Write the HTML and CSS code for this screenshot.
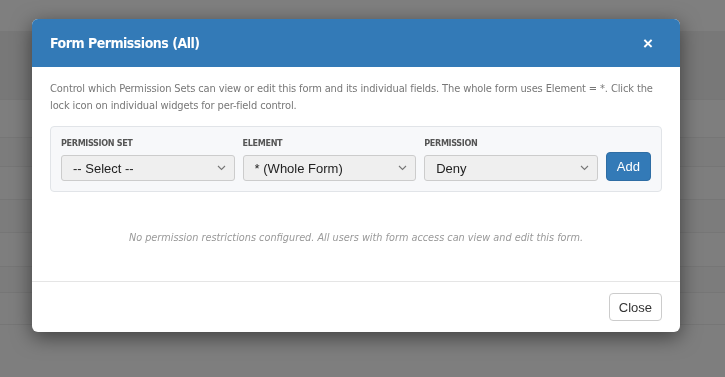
FILE: index.html
```html
<!DOCTYPE html>
<html lang="en">
<head>
    <meta charset="UTF-8">
    <meta name="viewport" content="width=device-width, initial-scale=1.0">
    <title>Form Permissions</title>
    <link rel="stylesheet" href="styles.css">
</head>
<body>
    <!-- Page behind the backdrop -->
    <div class="page">
        <div class="topbar"></div>
        <div class="row r1"></div>
        <div class="row r2"></div>
        <div class="row r3"></div>
        <div class="row r4"></div>
        <div class="row r5"></div>
        <div class="row r6"></div>
        <div class="row r7"></div>
        <div class="row r8"></div>
    </div>

    <div class="backdrop"></div>

    <div class="modal">
        <div class="modal-header">
            <h4 class="modal-title">Form Permissions (All)</h4>
            <span class="modal-close">&times;</span>
        </div>

        <div class="modal-body">
            <p class="help">Control which Permission Sets can view or edit this form and its individual fields. The whole form uses Element = *. Click the lock icon on individual widgets for per-field control.</p>

            <div class="perm-box">
                <div class="field">
                    <label for="permSet">Permission Set</label>
                    <div class="select-wrap">
                        <select id="permSet">
                            <option>-- Select --</option>
                        </select>
                        <svg class="chevron" width="9" height="6" viewBox="0 0 9 6"><path d="M1 1l3.5 3.5L8 1" fill="none" stroke="#777" stroke-width="1.1"/></svg>
                    </div>
                </div>
                <div class="field">
                    <label for="element">Element</label>
                    <div class="select-wrap">
                        <select id="element">
                            <option>* (Whole Form)</option>
                        </select>
                        <svg class="chevron" width="9" height="6" viewBox="0 0 9 6"><path d="M1 1l3.5 3.5L8 1" fill="none" stroke="#777" stroke-width="1.1"/></svg>
                    </div>
                </div>
                <div class="field">
                    <label for="permission">Permission</label>
                    <div class="select-wrap">
                        <select id="permission">
                            <option>Deny</option>
                            <option>View</option>
                            <option>Edit</option>
                        </select>
                        <svg class="chevron" width="9" height="6" viewBox="0 0 9 6"><path d="M1 1l3.5 3.5L8 1" fill="none" stroke="#777" stroke-width="1.1"/></svg>
                    </div>
                </div>
                <button class="btn btn-primary">Add</button>
            </div>

            <div class="empty">No permission restrictions configured. All users with form access can view and edit this form.</div>
        </div>

        <div class="modal-footer">
            <button class="btn btn-default">Close</button>
        </div>
    </div>
</body>
</html>
```

FILE: styles.css
```css
html, body { margin: 0; height: 100%; overflow: hidden; }
body { font-family: "DejaVu Sans Condensed", "DejaVu Sans", sans-serif; background: #fff; }

.page { height: 100%; background: #fdfdfd; }
.topbar { height: 31px; background: #fff; }
.row { border-bottom: 1px solid #ececec; }
.r1 { height: 68px; background: #f0f0f0; }
.r2 { height: 37px; }
.r3 { height: 28px; background: #f8f8f8; }
.r4 { height: 32px; }
.r5 { height: 32px; background: #f8f8f8; }
.r6 { height: 33px; }
.r7 { height: 25px; background: #f8f8f8; }
.r8 { height: 31px; }

.backdrop { position: fixed; inset: 0; background: rgba(0, 0, 0, 0.5); }

.modal { position: absolute; top: 19px; left: 32px; width: 648px; background: #fff; border-radius: 6px; box-shadow: 0 5px 20px rgba(0, 0, 0, 0.5); overflow: hidden; }

.modal-header { display: flex; align-items: center; justify-content: space-between; height: 48px; padding: 0 27px 0 18px; background: #337ab7; color: #fff; box-sizing: border-box; }
.modal-title { margin: 0; font-size: 14px; font-weight: bold; letter-spacing: -0.5px; }
.modal-close { font-family: "Liberation Sans", sans-serif; font-size: 17px; font-weight: bold; line-height: 1; }

.modal-body { padding: 13px 18px 15px; }
.help { margin: 0 0 12px; font-size: 11px; line-height: 17px; letter-spacing: -0.12px; color: #777; }

.perm-box { display: grid; grid-template-columns: 1fr 1fr 1fr auto; gap: 8px; align-items: end; padding: 10px; background: #f7f8fa; border: 1px solid #e1e4e8; border-radius: 4px; }
.field label { display: block; margin-bottom: 6px; font-size: 9px; line-height: 12px; font-weight: bold; letter-spacing: -0.35px; text-transform: uppercase; color: #555; }
.select-wrap { position: relative; }
.field select { display: block; width: 100%; height: 26px; padding: 0 24px 0 11px; -webkit-appearance: none; appearance: none; font-family: "Liberation Sans", Arial, sans-serif; font-size: 13px; color: #222; background-color: #efefef; border: 1px solid #ccc; border-radius: 3px; }
.chevron { position: absolute; right: 9px; top: 10px; pointer-events: none; }

.btn { font-family: "Liberation Sans", Arial, sans-serif; font-size: 13px; height: 29px; padding: 0 10px; border-radius: 4px; cursor: pointer; }
.btn-primary { background: #337ab7; border: 1px solid #2e6da4; color: #fff; }
.btn-default { height: 28px; padding: 0 9px; background: #fff; border: 1px solid #ccc; color: #333; }

.empty { padding: 37px 0 20px; text-align: center; font-size: 10.8px; line-height: 17px; font-style: italic; color: #999; }

.modal-footer { display: flex; justify-content: flex-end; padding: 11px 18px; border-top: 1px solid #e5e5e5; }
```
